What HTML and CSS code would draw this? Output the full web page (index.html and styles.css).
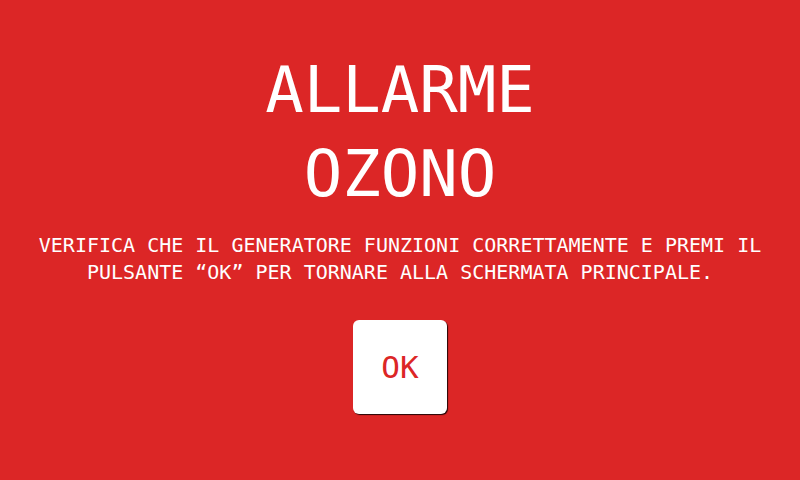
FILE: index.html
```html
<!DOCTYPE html>
<html lang="it">
<head>
<meta charset="utf-8">
<title>Allarme Ozono</title>
<link rel="stylesheet" href="styles.css">
</head>
<body>
<main class="screen">
  <h1 class="title">ALLARME<br>OZONO</h1>
  <p class="message">VERIFICA CHE IL GENERATORE FUNZIONI CORRETTAMENTE E PREMI IL PULSANTE “OK” PER TORNARE ALLA SCHERMATA PRINCIPALE.</p>
  <button class="ok-button" type="button">OK</button>
</main>
</body>
</html>
```
FILE: styles.css
```css
html, body {
  margin: 0;
  padding: 0;
  width: 800px;
  height: 480px;
  overflow: hidden;
  background: #dc2626;
}

.screen {
  display: flex;
  flex-direction: column;
  align-items: center;
  padding-top: 48px;
  box-sizing: border-box;
  height: 480px;
  color: #ffffff;
  font-family: "DejaVu Sans Mono", "Liberation Mono", monospace;
}

.title {
  margin: 0;
  font-size: 64px;
  font-weight: normal;
  line-height: 84px;
  text-align: center;
}

.message {
  margin: 16px 0 0;
  max-width: 740px;
  font-size: 20px;
  line-height: 27px;
  text-align: center;
}

.ok-button {
  margin-top: 34px;
  width: 94px;
  height: 94px;
  border: none;
  border-radius: 6px;
  background: #ffffff;
  box-shadow: 1px 1px 1px rgba(0, 0, 0, 0.85);
  color: #dc2626;
  font-family: "DejaVu Sans Mono", "Liberation Mono", monospace;
  font-size: 31px;
  padding: 0;
  display: flex;
  align-items: center;
  justify-content: center;
}
```
